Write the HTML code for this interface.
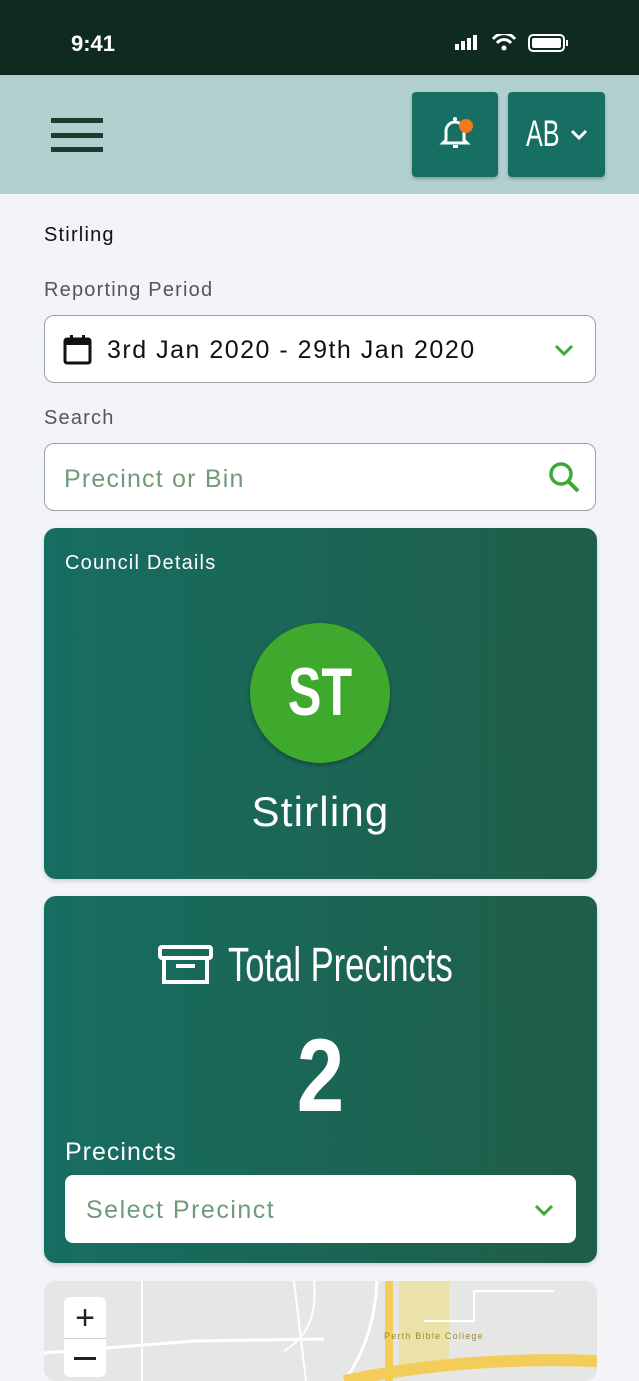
<!DOCTYPE html>
<html><head><style>
*{margin:0;padding:0;box-sizing:border-box}
body{width:639px;height:1366px;overflow:hidden;background:#f2f4f8;font-family:"Liberation Sans",sans-serif;position:relative;letter-spacing:0.075em}
.abs{position:absolute}
.narrow{letter-spacing:0;transform-origin:0 0}
.card{position:absolute;left:44px;width:553px;border-radius:12px;background:linear-gradient(90deg,#176d62,#1f5e48);box-shadow:0 2px 4px rgba(0,0,0,.15)}
.inp{position:absolute;left:44px;width:552px;height:68px;border:1.5px solid #9aa3a0;border-radius:10px;background:#fff}
</style></head><body>
<div class="abs" style="left:0;top:0;width:639px;height:75px;background:#0f2a1f"></div>
<div class="abs" style="left:71px;top:31px;color:#fff;font-size:22px;font-weight:bold;letter-spacing:0">9:41</div>
<svg class="abs" style="left:455px;top:34px" width="115" height="20">
<rect x="0" y="10" width="4" height="6" fill="#fff"/><rect x="6" y="7" width="4" height="9" fill="#fff"/><rect x="12" y="4" width="4" height="12" fill="#fff"/><rect x="18" y="1" width="4" height="15" fill="#fff"/>
<path d="M38 5 A14 14 0 0 1 60 5" stroke="#fff" stroke-width="3" fill="none"/><path d="M42 9 A9 9 0 0 1 56 9" stroke="#fff" stroke-width="3" fill="none"/><circle cx="49" cy="14" r="2.5" fill="#fff"/>
<rect x="74" y="1" width="35" height="16" rx="4" stroke="#fff" stroke-width="2" fill="none"/><rect x="77" y="4" width="29" height="10" rx="2" fill="#fff"/><rect x="111" y="6" width="2" height="6" fill="#fff"/>
</svg>
<div class="abs" style="left:0;top:75px;width:639px;height:119px;background:#b2cfcf"></div>
<div class="abs" style="left:51px;top:118px;width:52px;height:5px;background:#173d2d"></div>
<div class="abs" style="left:51px;top:133px;width:52px;height:5px;background:#173d2d"></div>
<div class="abs" style="left:51px;top:147px;width:52px;height:5px;background:#173d2d"></div>
<div class="abs" style="left:412px;top:92px;width:86px;height:85px;background:#166f62;border-radius:4px;box-shadow:0 2px 3px rgba(0,0,0,.25)"></div>
<svg class="abs" style="left:438px;top:114px" width="36" height="40"><path d="M8 26 V17 a9 9 0 0 1 18 0 V26 l3 3 H5 z" stroke="#fff" stroke-width="3" fill="none"/><rect x="15" y="31" width="5" height="3" fill="#fff"/><circle cx="17" cy="5" r="2" fill="#fff"/><circle cx="28" cy="12" r="7" fill="#f07a1a"/></svg>
<div class="abs" style="left:508px;top:92px;width:97px;height:85px;background:#166f62;border-radius:4px;box-shadow:0 2px 3px rgba(0,0,0,.25)"></div>
<div class="abs narrow" style="left:526px;top:113px;color:#fff;font-size:37px;transform:scaleX(0.68)">AB</div>
<svg class="abs" style="left:569px;top:128px" width="20" height="14"><path d="M3 3 l7 7 l7 -7" stroke="#fff" stroke-width="3" fill="none"/></svg>
<div class="abs" style="left:44px;top:224px;font-size:20px;color:#111">Stirling</div>
<div class="abs" style="left:44px;top:279px;font-size:20px;color:#555">Reporting Period</div>
<div class="inp" style="top:315px"></div>
<svg class="abs" style="left:62px;top:334px" width="32" height="32"><rect x="3" y="5" width="25" height="24" rx="2" stroke="#111" stroke-width="3" fill="none"/><rect x="3" y="5" width="25" height="6" fill="#111"/><rect x="8" y="1" width="3" height="6" fill="#111"/><rect x="20" y="1" width="3" height="6" fill="#111"/></svg>
<div class="abs" style="left:107px;top:336px;font-size:25px;color:#111;letter-spacing:0.06em">3rd Jan 2020 - 29th Jan 2020</div>
<svg class="abs" style="left:553px;top:342px" width="22" height="16"><path d="M3 4 l8 8 l8 -8" stroke="#3aa935" stroke-width="3" fill="none"/></svg>
<div class="abs" style="left:44px;top:407px;font-size:20px;color:#555">Search</div>
<div class="inp" style="top:443px"></div>
<div class="abs" style="left:64px;top:465px;font-size:25px;color:#6f9b7a">Precinct or Bin</div>
<svg class="abs" style="left:548px;top:461px" width="34" height="34"><circle cx="13" cy="13" r="10" stroke="#3aa935" stroke-width="3.5" fill="none"/><path d="M20 20 l10 10" stroke="#3aa935" stroke-width="4"/></svg>
<div class="card" style="top:528px;height:351px"></div>
<div class="abs" style="left:65px;top:552px;font-size:20px;color:#fff">Council Details</div>
<div class="abs" style="left:250px;top:623px;width:140px;height:140px;border-radius:50%;background:#3ea92c;box-shadow:0 2px 4px rgba(0,0,0,.3)"></div>
<div class="abs" style="left:250px;top:652px;width:140px;text-align:center;color:#fff;font-size:68px;font-weight:bold;line-height:80px;letter-spacing:0;transform:scaleX(0.74)">ST</div>
<div class="abs" style="left:44px;top:788px;width:553px;text-align:center;color:#fff;font-size:42px">Stirling</div>
<div class="card" style="top:896px;height:367px"></div>
<svg class="abs" style="left:157px;top:944px" width="58" height="42"><rect x="3" y="3" width="51" height="11" rx="2" stroke="#fff" stroke-width="4" fill="none"/><rect x="7" y="14" width="43" height="24" stroke="#fff" stroke-width="4" fill="none"/><path d="M19 22 H38" stroke="#fff" stroke-width="4"/></svg>
<div class="abs narrow" style="left:228px;top:938px;color:#fff;font-size:48px;transform:scaleX(0.72)">Total Precincts</div>
<div class="abs" style="left:44px;top:1017px;width:553px;text-align:center;color:#fff;font-size:104px;font-weight:bold;letter-spacing:0;transform:scaleX(0.82)">2</div>
<div class="abs" style="left:65px;top:1138px;color:#fff;font-size:25px;letter-spacing:0.04em">Precincts</div>
<div class="abs" style="left:65px;top:1175px;width:511px;height:68px;background:#fff;border-radius:8px"></div>
<div class="abs" style="left:86px;top:1196px;font-size:25px;color:#6f9b7a;letter-spacing:0.06em">Select Precinct</div>
<svg class="abs" style="left:533px;top:1202px" width="22" height="16"><path d="M3 4 l8 8 l8 -8" stroke="#3aa935" stroke-width="3" fill="none"/></svg>
<div class="abs" style="left:44px;top:1281px;width:553px;height:100px;background:#e6e6e4;border-radius:12px;overflow:hidden">
<svg width="553" height="100"><path d="M0 72 L150 60 L280 58" stroke="#fff" stroke-width="3" fill="none"/><path d="M98 0 V100" stroke="#fff" stroke-width="2"/><path d="M250 0 L262 100" stroke="#fff" stroke-width="2"/><path d="M270 0 Q275 50 240 70" stroke="#fff" stroke-width="2" fill="none"/><rect x="355" y="0" width="50" height="90" fill="#eae2a8"/><path d="M345 0 V100" stroke="#f3cd5a" stroke-width="8"/><path d="M333 0 Q330 60 300 100" stroke="#fff" stroke-width="3" fill="none"/><path d="M300 100 Q420 75 553 80" stroke="#f3cd5a" stroke-width="12" fill="none"/><path d="M380 40 H430 V10 H510" stroke="#fff" stroke-width="2" fill="none"/><text x="340" y="58" font-size="9" fill="#9a8a30" font-family="Liberation Sans">Perth Bible College</text></svg>
</div>
<div class="abs" style="left:64px;top:1297px;width:42px;height:80px;background:#fff;border-radius:6px"></div>
<div class="abs" style="left:64px;top:1338px;width:42px;height:1px;background:#ccc"></div>
<div class="abs" style="left:64px;top:1298px;width:42px;text-align:center;font-size:34px;line-height:40px;color:#222;letter-spacing:0">+</div>
<div class="abs" style="left:74px;top:1357px;width:22px;height:3px;background:#222"></div>
</body></html>
